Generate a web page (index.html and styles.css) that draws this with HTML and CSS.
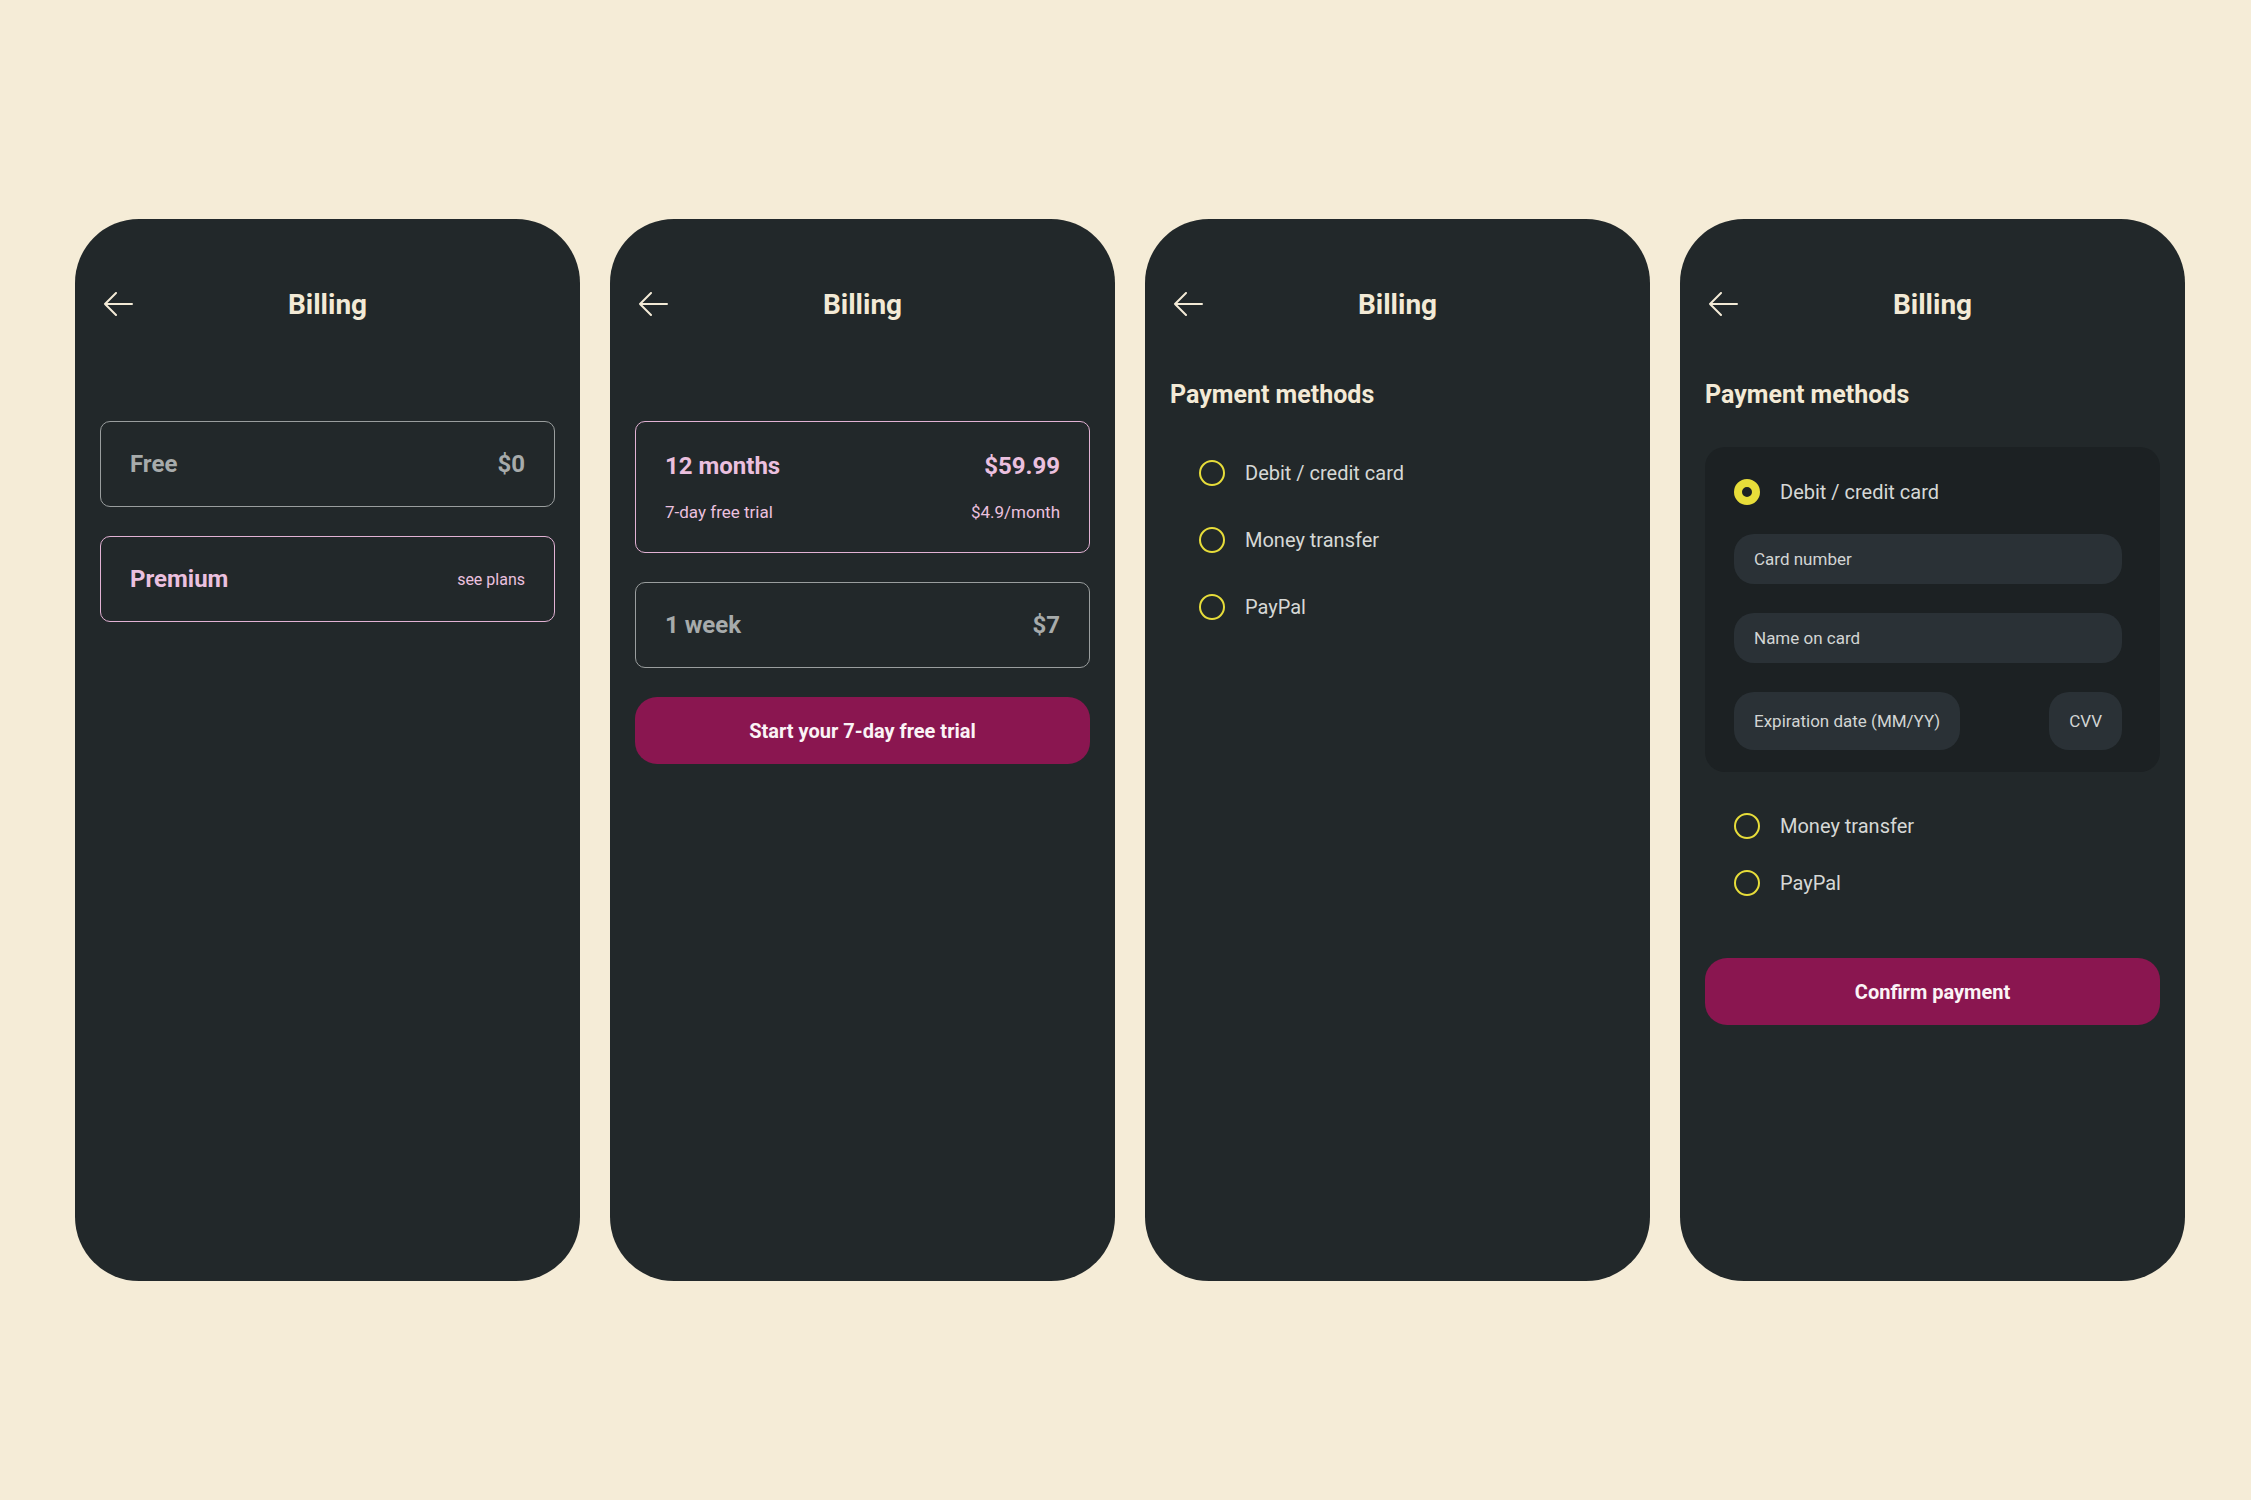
FILE: index.html
```html
<!DOCTYPE html>
<html lang="en">
<head>
  <meta charset="UTF-8">
  <title>Billing</title>
  <link rel="stylesheet" href="styles.css">
</head>
<body>
  <div class="board">

    <!-- 1: plan choice -->
    <section class="phone">
      <header class="bar">
        <svg class="back" width="30" height="24" viewBox="0 0 30 24"><path d="M29 12H2M13 1L2 12l11 11"/></svg>
        <h1 class="title">Billing</h1>
      </header>
      <div class="plans">
        <div class="plan plan-muted">
          <div class="plan-row"><span class="plan-name">Free</span><span class="plan-price">$0</span></div>
        </div>
        <div class="plan plan-pink">
          <div class="plan-row"><span class="plan-name">Premium</span><span class="plan-link">see plans</span></div>
        </div>
      </div>
    </section>

    <!-- 2: premium plans -->
    <section class="phone">
      <header class="bar">
        <svg class="back" width="30" height="24" viewBox="0 0 30 24"><path d="M29 12H2M13 1L2 12l11 11"/></svg>
        <h1 class="title">Billing</h1>
      </header>
      <div class="plans">
        <div class="plan plan-pink plan-tall">
          <div class="plan-row"><span class="plan-name">12 months</span><span class="plan-price">$59.99</span></div>
          <div class="plan-row plan-sub"><span>7-day free trial</span><span>$4.9/month</span></div>
        </div>
        <div class="plan plan-muted">
          <div class="plan-row"><span class="plan-name">1 week</span><span class="plan-price">$7</span></div>
        </div>
        <button class="cta">Start your 7-day free trial</button>
      </div>
    </section>

    <!-- 3: payment methods -->
    <section class="phone">
      <header class="bar">
        <svg class="back" width="30" height="24" viewBox="0 0 30 24"><path d="M29 12H2M13 1L2 12l11 11"/></svg>
        <h1 class="title">Billing</h1>
      </header>
      <h2 class="section">Payment methods</h2>
      <ul class="methods methods-open">
        <li class="method"><span class="radio"></span>Debit / credit card</li>
        <li class="method"><span class="radio"></span>Money transfer</li>
        <li class="method"><span class="radio"></span>PayPal</li>
      </ul>
    </section>

    <!-- 4: card details -->
    <section class="phone">
      <header class="bar">
        <svg class="back" width="30" height="24" viewBox="0 0 30 24"><path d="M29 12H2M13 1L2 12l11 11"/></svg>
        <h1 class="title">Billing</h1>
      </header>
      <h2 class="section">Payment methods</h2>
      <div class="card-panel">
        <div class="method"><span class="radio radio-on"></span>Debit / credit card</div>
        <div class="field">Card number</div>
        <div class="field">Name on card</div>
        <div class="field-row">
          <div class="field field-tall">Expiration date (MM/YY)</div>
          <div class="field field-tall">CVV</div>
        </div>
      </div>
      <ul class="methods methods-rest">
        <li class="method"><span class="radio"></span>Money transfer</li>
        <li class="method"><span class="radio"></span>PayPal</li>
      </ul>
      <button class="cta cta-confirm">Confirm payment</button>
    </section>

  </div>
</body>
</html>
```

FILE: styles.css
```css
body {
  margin: 0;
  background-color: #f5ecd7;
  font-family: Roboto, "Liberation Sans", sans-serif;
}

.board {
  display: flex;
  gap: 30px;
  padding: 219px 0 0 75px;
}

.phone {
  box-sizing: border-box;
  width: 505px;
  height: 1062px;
  padding: 66px 25px 0;
  background-color: #22282a;
  border-radius: 64px;
  display: flex;
  flex-direction: column;
}

/* header */
.bar {
  height: 40px;
  display: grid;
  grid-template-columns: 1fr auto 1fr;
  align-items: center;
}
.back {
  margin-left: 3px;
  margin-top: -2px;
  fill: none;
  stroke: #f3ead6;
  stroke-width: 2;
  stroke-linecap: round;
  stroke-linejoin: round;
}
.title {
  margin: 0;
  font-size: 28px;
  font-weight: 700;
  line-height: 40px;
  color: #f3ead6;
}

/* plans */
.plans {
  margin-top: 96px;
  display: flex;
  flex-direction: column;
  gap: 29px;
}
.plan {
  box-sizing: border-box;
  height: 86px;
  padding: 0 29px;
  border: 1px solid;
  border-radius: 10px;
  display: flex;
  flex-direction: column;
  justify-content: center;
}
.plan-tall {
  height: 132px;
  gap: 20px;
}
.plan-row {
  display: flex;
  justify-content: space-between;
  align-items: center;
}
.plan-name,
.plan-price {
  font-size: 24px;
  font-weight: 700;
  line-height: 30px;
}
.plan-link {
  font-size: 16px;
}
.plan-sub {
  font-size: 17px;
  line-height: 22px;
}
.plan-muted {
  border-color: #9a9e9e;
  color: #a7abab;
}
.plan-pink {
  border-color: #e2b2d4;
  color: #ebc0df;
}

.cta {
  height: 67px;
  border: none;
  border-radius: 22px;
  background-color: #8a1650;
  color: #fbf3f6;
  font-family: inherit;
  font-size: 20px;
  font-weight: 700;
  cursor: pointer;
}
.cta-confirm {
  margin-top: 62px;
}

/* payment methods */
.section {
  margin: 55px 0 0;
  font-size: 25px;
  font-weight: 700;
  line-height: 30px;
  color: #f3ead6;
}
.methods {
  list-style: none;
  margin: 0;
  padding: 0 0 0 29px;
  display: flex;
  flex-direction: column;
}
.methods-open {
  margin-top: 50px;
  gap: 41px;
}
.methods-rest {
  margin-top: 41px;
  gap: 31px;
}
.method {
  display: flex;
  align-items: center;
  gap: 20px;
  font-size: 20px;
  line-height: 26px;
  color: #d6d8d6;
}
.radio {
  box-sizing: border-box;
  width: 26px;
  height: 26px;
  border: 2.5px solid #e7dd3a;
  border-radius: 50%;
  flex-shrink: 0;
}
.radio-on {
  border-width: 8px;
}

.card-panel {
  margin-top: 37px;
  padding: 32px 38px 22px 29px;
  background-color: #1c2123;
  border-radius: 20px;
  display: flex;
  flex-direction: column;
  gap: 29px;
}
.field {
  box-sizing: border-box;
  height: 50px;
  padding: 0 20px;
  background-color: #2a3136;
  border-radius: 20px;
  display: flex;
  align-items: center;
  font-size: 17px;
  color: #d2d5d4;
}
.field-row {
  display: flex;
  justify-content: space-between;
}
.field-tall {
  height: 58px;
}
```
